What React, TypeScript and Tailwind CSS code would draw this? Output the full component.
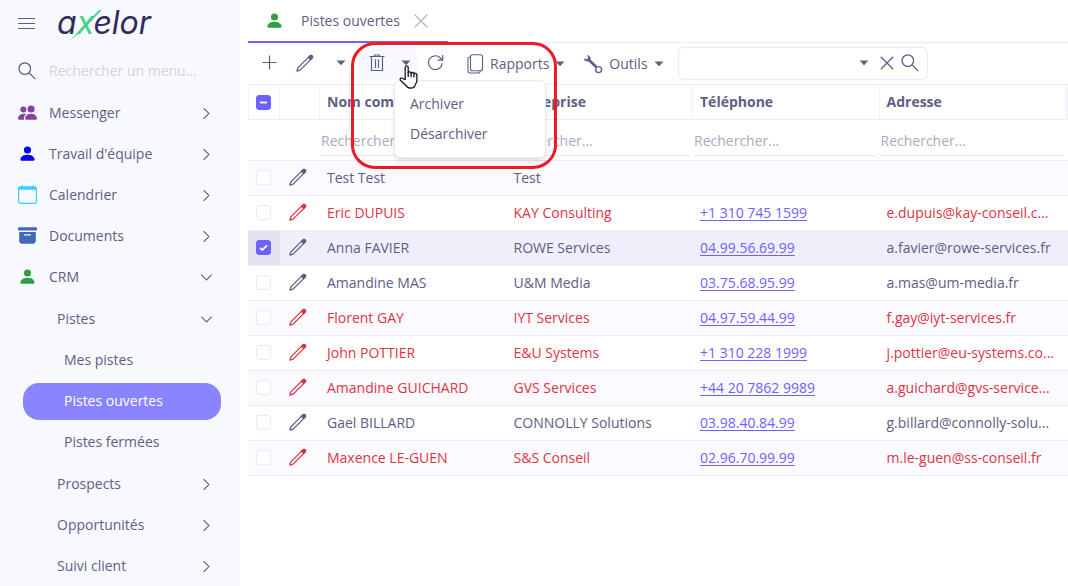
import { useState } from "react";
import type { ReactNode } from "react";
import {
  BsArchiveFill,
  BsCalendar,
  BsChevronDown,
  BsChevronRight,
  BsPeopleFill,
  BsPersonFill,
} from "react-icons/bs";

interface Lead {
  id: number;
  name: string;
  company: string;
  phone: string;
  email: string;
  late?: boolean;
}

const LEADS: Lead[] = [
  { id: 1, name: "Test Test", company: "Test", phone: "", email: "" },
  {
    id: 2,
    name: "Eric DUPUIS",
    company: "KAY Consulting",
    phone: "+1 310 745 1599",
    email: "e.dupuis@kay-conseil.c...",
    late: true,
  },
  {
    id: 3,
    name: "Anna FAVIER",
    company: "ROWE Services",
    phone: "04.99.56.69.99",
    email: "a.favier@rowe-services.fr",
  },
  {
    id: 4,
    name: "Amandine MAS",
    company: "U&M Media",
    phone: "03.75.68.95.99",
    email: "a.mas@um-media.fr",
  },
  {
    id: 5,
    name: "Florent GAY",
    company: "IYT Services",
    phone: "04.97.59.44.99",
    email: "f.gay@iyt-services.fr",
    late: true,
  },
  {
    id: 6,
    name: "John POTTIER",
    company: "E&U Systems",
    phone: "+1 310 228 1999",
    email: "j.pottier@eu-systems.co...",
    late: true,
  },
  {
    id: 7,
    name: "Amandine GUICHARD",
    company: "GVS Services",
    phone: "+44 20 7862 9989",
    email: "a.guichard@gvs-service...",
    late: true,
  },
  {
    id: 8,
    name: "Gael BILLARD",
    company: "CONNOLLY Solutions",
    phone: "03.98.40.84.99",
    email: "g.billard@connolly-solu...",
  },
  {
    id: 9,
    name: "Maxence LE-GUEN",
    company: "S&S Conseil",
    phone: "02.96.70.99.99",
    email: "m.le-guen@ss-conseil.fr",
    late: true,
  },
];

const COLUMNS = ["Nom complet", "Entreprise", "Téléphone", "Adresse"];

// Icons

const Caret = () => (
  <svg width="10" height="6" viewBox="0 0 10 6" fill="currentColor">
    <path d="M0.500 0.500h9L5 5.200z" />
  </svg>
);

const Pencil = () => (
  <svg
    width="18"
    height="18"
    viewBox="0 0 18 18"
    fill="none"
    stroke="currentColor"
    strokeWidth="1.3"
    strokeLinejoin="round"
  >
    <path d="M0.900 17.100l1-3.200L13.900 1.900a1.500 1.500 0 0 1 2.200 0 1.500 1.500 0 0 1 0 2.200L4.100 16.100z" />
    <path
      d="M12.400 3.400l1.500-1.500a1.500 1.500 0 0 1 2.200 2.200l-1.500 1.500z"
      fill="currentColor"
    />
  </svg>
);

const Search = () => (
  <svg
    width="18"
    height="18"
    viewBox="0 0 18 18"
    fill="none"
    stroke="currentColor"
    strokeWidth="1.3"
  >
    <circle cx="6.800" cy="6.600" r="5.800" />
    <path d="M11 10.800l6.300 6.300" />
  </svg>
);

const Cross = () => (
  <svg
    width="14"
    height="14"
    viewBox="0 0 14 14"
    stroke="currentColor"
    strokeWidth="1.3"
  >
    <path d="M0.800 0.800l12.400 12.400M13.200 0.800L0.800 13.200" />
  </svg>
);

const Trash = () => (
  <svg
    width="16"
    height="18"
    viewBox="0 0 16 18"
    fill="none"
    stroke="currentColor"
    strokeWidth="1.2"
  >
    <path d="M0.500 2.500h15M5.500 2.400V1h5v1.400M2.500 2.800v13.700h11V2.800M6.500 5.200v8.800M9.500 5.200v8.800" />
  </svg>
);

const Refresh = () => (
  <svg
    width="17"
    height="17"
    viewBox="0 0 17 17"
    fill="none"
    stroke="currentColor"
    strokeWidth="1.2"
  >
    <path d="M15.200 9.200A6.900 6.900 0 1 1 13.400 4l2 2" />
    <path d="M15.700 1v5.200h-5.200" />
  </svg>
);

const Copy = () => (
  <svg
    width="17"
    height="20"
    viewBox="0 0 17 20"
    fill="none"
    stroke="currentColor"
    strokeWidth="1.1"
  >
    <rect x="3.500" y="0.800" width="12" height="16" rx="2" />
    <path d="M3.500 3.200H2.400a1.400 1.400 0 0 0-1.400 1.400v12.600A1.800 1.800 0 0 0 2.800 19h8.600a1.600 1.600 0 0 0 1.600-1.600v-.6" />
  </svg>
);

const Wrench = () => (
  <svg width="20" height="20" viewBox="0 0 20 20" fill="currentColor">
    <path d="M0.600 4.200l2.900 1.300 1.700-1.500L4.400 0.900C6.800 1.300 8 3.400 7.500 5.400l6.700 6.700-1.900 1.900-6.800-6.600C3.200 7.900 1 6.600 0.600 4.200z" />
    <circle
      cx="15.600"
      cy="15.600"
      r="3"
      fill="none"
      stroke="currentColor"
      strokeWidth="1.400"
    />
  </svg>
);

const HandCursor = () => (
  <svg
    width="20"
    height="24"
    viewBox="0 0 20 24"
    fill="white"
    stroke="#15151f"
    strokeWidth="1.3"
    strokeLinejoin="round"
  >
    <path d="M6.200 14.500V2.400a1.500 1.500 0 0 1 3 0v5.200c.3-1 2.600-1 2.900.4.500-.9 2.500-.7 2.800.7.700-.8 3-.4 3 1.400v5.400c0 2.400-1.600 3.200-1.900 5.200-.5 2-2 2.400-4.200 2.400-2.500 0-3.700-.6-5-2.800L1.400 15.200c-.8-1.400.6-2.900 2-1.900z" />
    <path d="M9.200 7v5M12.100 8v4.200M14.900 9v3.600" />
  </svg>
);

const Logo = () => (
  <svg
    width="100"
    height="41"
    viewBox="0 0 100 41"
    role="img"
    aria-label="axelor"
    className="overflow-visible"
  >
    <text
      x="0"
      y="31"
      fontFamily="Inter, sans-serif"
      fontSize="32"
      fontStyle="italic"
      fontWeight="400"
      fill="#2f2c5c"
    >
      a<tspan fill="#3fd38e">x</tspan>elor
    </text>
    <path d="M12.500 38L42 7h2.500L28 25z" fill="#3fd38e" />
  </svg>
);

// Sidebar

interface MenuItemProps {
  label: string;
  icon?: ReactNode;
  level?: 1 | 2 | 3;
  open?: boolean;
  active?: boolean;
}

const INDENTS = {
  1: "pl-2.5",
  2: "pl-[49px]",
  3: "pl-14",
};

function MenuItem({ label, icon, level = 1, open, active }: MenuItemProps) {
  return (
    <a
      href="#"
      aria-current={active ? "page" : undefined}
      className={`flex h-[37px] items-center pr-2 pb-px ${
        active
          ? "ml-[15px] rounded-2xl bg-[#8a85ff] pl-[41px] text-white"
          : INDENTS[level]
      }`}
    >
      {icon && <span className="flex w-[31px] shrink-0 pb-0.5">{icon}</span>}
      <span className="flex-1">{label}</span>
      {level < 3 &&
        (open ? (
          <BsChevronDown size={13} strokeWidth={0.5} />
        ) : (
          <BsChevronRight size={13} strokeWidth={0.5} />
        ))}
    </a>
  );
}

function Sidebar() {
  return (
    <aside className="w-60 shrink-0 overflow-hidden bg-[#f8f9ff] pr-[19px] pl-2">
      <div className="flex h-[47px] items-center pl-2.5">
        <button type="button" aria-label="Menu" className="w-[39px]">
          <svg
            width="17"
            height="13"
            viewBox="0 0 17 13"
            stroke="currentColor"
            strokeWidth="1.2"
          >
            <path d="M0 1.500h17M0 6.500h17M0 11.500h17" />
          </svg>
        </button>
        <Logo />
      </div>
      <label className="flex h-[46px] items-center pt-0.5 pl-2.5">
        <span className="w-[31px] shrink-0">
          <Search />
        </span>
        <input
          type="text"
          placeholder="Rechercher un menu..."
          aria-label="Rechercher un menu"
          className="w-full bg-transparent outline-none placeholder:text-[#d3d3e2]"
        />
      </label>
      <nav className="flex flex-col gap-1 pt-0.5">
        <MenuItem
          label="Messenger"
          icon={<BsPeopleFill size={19} color="#8043a0" />}
        />
        <MenuItem
          label="Travail d'équipe"
          icon={<BsPersonFill size={19} color="#0000ff" />}
        />
        <MenuItem
          label="Calendrier"
          icon={<BsCalendar size={19} color="#3dcdfd" />}
        />
        <MenuItem
          label="Documents"
          icon={<BsArchiveFill size={19} color="#4169b8" />}
        />
        <MenuItem
          label="CRM"
          icon={<BsPersonFill size={19} color="#2f9e44" />}
          open
        />
        <div className="flex flex-col gap-1 pt-px">
          <MenuItem label="Pistes" level={2} open />
          <div className="flex flex-col gap-1 pb-px">
            <MenuItem label="Mes pistes" level={3} />
            <MenuItem label="Pistes ouvertes" level={3} active />
            <MenuItem label="Pistes fermées" level={3} />
          </div>
          <MenuItem label="Prospects" level={2} />
          <MenuItem label="Opportunités" level={2} />
          <MenuItem label="Suivi client" level={2} />
        </div>
      </nav>
    </aside>
  );
}

// Toolbar

function Toolbar() {
  const [menuOpen, setMenuOpen] = useState(true);

  return (
    <div className="relative flex h-[42px] items-center border-b border-[#ebeaff] pl-[3px]">
      <button
        type="button"
        aria-label="Nouveau"
        className="grid w-9 place-items-center pb-0.5"
      >
        <svg
          width="15"
          height="15"
          viewBox="0 0 15 15"
          stroke="currentColor"
          strokeWidth="1.2"
        >
          <path d="M0.500 7.500h14M7.500 0.500v14" />
        </svg>
      </button>
      <button
        type="button"
        aria-label="Modifier"
        className="grid w-9 place-items-center pb-0.5"
      >
        <Pencil />
      </button>
      <button
        type="button"
        aria-label="Plus d'actions"
        className="grid w-9 place-items-center pb-px"
      >
        <Caret />
      </button>
      <div className="relative flex h-[33px] rounded bg-[#f8f9ff]">
        <button
          type="button"
          aria-label="Supprimer"
          className="grid w-9 place-items-center pb-px"
        >
          <Trash />
        </button>
        <button
          type="button"
          aria-label="Archivage"
          aria-expanded={menuOpen}
          onClick={() => setMenuOpen(!menuOpen)}
          className="grid w-[22px] place-items-center pb-px"
        >
          <Caret />
        </button>
        {menuOpen && (
          <div className="absolute top-full left-[35px] z-10 w-[152px] rounded-md border border-[#e8e8fb] bg-white py-2 shadow-md">
            <button
              type="button"
              className="block h-[30px] w-full px-[15px] text-left"
            >
              Archiver
            </button>
            <button
              type="button"
              className="block h-[30px] w-full px-[15px] text-left"
            >
              Désarchiver
            </button>
          </div>
        )}
        <span className="pointer-events-none absolute top-[18px] left-10 z-20">
          <HandCursor />
        </span>
      </div>
      <button
        type="button"
        aria-label="Rafraîchir"
        className="grid w-9 place-items-center pb-0.5"
      >
        <Refresh />
      </button>
      <button type="button" className="ml-3.5 flex items-center gap-1.5">
        <Copy />
        Rapports
        <Caret />
      </button>
      <button type="button" className="ml-[18px] flex items-center gap-1.5">
        <Wrench />
        Outils
        <Caret />
      </button>
      <div className="ml-3.5 flex h-[33px] w-[250px] items-center rounded-md border border-[#e8e8ff] pr-2 pb-px">
        <input
          type="text"
          aria-label="Recherche"
          className="h-full min-w-0 flex-1 bg-transparent px-2 outline-none"
        />
        <button type="button" aria-label="Filtres" className="px-[11px]">
          <Caret />
        </button>
        <button type="button" aria-label="Effacer">
          <Cross />
        </button>
        <button type="button" aria-label="Rechercher" className="ml-[7px]">
          <Search />
        </button>
      </div>
      {/* Highlight around the archive menu */}
      <div className="pointer-events-none absolute -top-px left-[103px] z-20 h-[127px] w-[206px] rounded-3xl border-3 border-[#ed1c24]" />
    </div>
  );
}

// Grid

interface CheckboxProps {
  label: string;
  checked: boolean;
  partial?: boolean;
  onChange: () => void;
}

function Checkbox({ label, checked, partial, onChange }: CheckboxProps) {
  return (
    <span className="grid place-items-center">
      <input
        type="checkbox"
        aria-label={label}
        checked={checked}
        onChange={onChange}
        className="col-start-1 row-start-1 size-[15px] appearance-none rounded-[3px] border border-[#e8e8ff] bg-white checked:border-[#6c63ff] checked:bg-[#6c63ff]"
      />
      {checked && (
        <svg
          width="9"
          height="9"
          viewBox="0 0 9 9"
          fill="none"
          stroke="white"
          strokeWidth="1.8"
          className="pointer-events-none col-start-1 row-start-1"
        >
          <path d={partial ? "M1 4.500h7" : "M1 4.800l2.300 2.200L8 2.400"} />
        </svg>
      )}
    </span>
  );
}

function LeadsGrid() {
  const [selected, setSelected] = useState<number[]>([3]);

  const toggle = (id: number) => {
    setSelected(
      selected.includes(id)
        ? selected.filter((s) => s !== id)
        : [...selected, id],
    );
  };

  const toggleAll = () => {
    setSelected(selected.length ? [] : LEADS.map((lead) => lead.id));
  };

  return (
    <table className="w-full table-fixed border-separate border-spacing-0 [&_td]:border-b [&_td]:border-b-[#ebeaff] [&_th]:border-r [&_th]:border-b [&_th]:border-r-[#f1f1fd] [&_th]:border-b-[#ebeaff]">
      <colgroup>
        <col className="w-8" />
        <col className="w-10" />
        <col />
        <col />
        <col />
        <col />
        <col className="w-0.5" />
      </colgroup>
      <thead>
        <tr className="h-[35px]">
          <th className="border-l border-l-[#f1f1fd] p-0 pr-px">
            <Checkbox
              label="Tout sélectionner"
              checked={selected.length > 0}
              partial={selected.length < LEADS.length}
              onChange={toggleAll}
            />
          </th>
          <th />
          {COLUMNS.map((column) => (
            <th key={column} className="px-[7px] py-0 text-left font-bold">
              {column}
            </th>
          ))}
          <th className="p-0" />
        </tr>
        <tr className="h-[41px]">
          <td />
          <td />
          {COLUMNS.map((column) => (
            <td key={column} className="py-0 pr-[3px] pl-px">
              <input
                type="text"
                placeholder="Rechercher..."
                aria-label={`Rechercher ${column}`}
                className="block h-[31px] w-full border-b border-[#e8e8fb] bg-transparent pt-0.5 outline-none placeholder:text-[#aaa9bd]"
              />
            </td>
          ))}
          <td className="p-0" />
        </tr>
      </thead>
      <tbody>
        {LEADS.map((lead) => {
          const isSelected = selected.includes(lead.id);
          return (
            <tr
              key={lead.id}
              className={`h-[35px] ${
                isSelected ? "bg-[#efeffb]" : "odd:bg-[#fafaff]"
              } ${lead.late ? "text-[#dc3545]" : ""}`}
            >
              <td
                className={
                  isSelected ? "bg-[#e3e3ef] p-0 pr-px pb-px" : "p-0 pr-px pb-px"
                }
              >
                <Checkbox
                  label={`Sélectionner ${lead.name}`}
                  checked={isSelected}
                  onChange={() => toggle(lead.id)}
                />
              </td>
              <td className="p-0">
                <button
                  type="button"
                  aria-label={`Modifier ${lead.name}`}
                  className="mb-0.5 ml-[9px] block"
                >
                  <Pencil />
                </button>
              </td>
              <td className="truncate px-[7px] py-0">{lead.name}</td>
              <td className="truncate px-[7px] py-0">{lead.company}</td>
              <td className="truncate px-[7px] py-0">
                {lead.phone && (
                  <a
                    href={`tel:${lead.phone}`}
                    className="text-[#6c63ff] underline underline-offset-2"
                  >
                    {lead.phone}
                  </a>
                )}
              </td>
              <td className="truncate py-0 pr-0 pl-[7px]">{lead.email}</td>
              <td className="p-0" />
            </tr>
          );
        })}
      </tbody>
    </table>
  );
}

export default function App() {
  return (
    <div className="flex min-h-screen bg-white font-['Open_Sans','Noto_Sans',sans-serif] text-sm leading-5 text-[#5d6083]">
      <Sidebar />
      <main className="ml-2 min-w-0 flex-1">
        <div className="flex h-[43px] border-b border-[#ebeaff]">
          <div className="flex h-[43px] w-[200px] items-center border-b-2 border-[#6c63ff] pl-[17px]">
            <BsPersonFill size={19} color="#2f9e44" />
            <span className="ml-[17px]">Pistes ouvertes</span>
            <button
              type="button"
              aria-label="Fermer"
              className="ml-3.5 text-[#b5b4c8]"
            >
              <Cross />
            </button>
          </div>
        </div>
        <Toolbar />
        <LeadsGrid />
      </main>
    </div>
  );
}
